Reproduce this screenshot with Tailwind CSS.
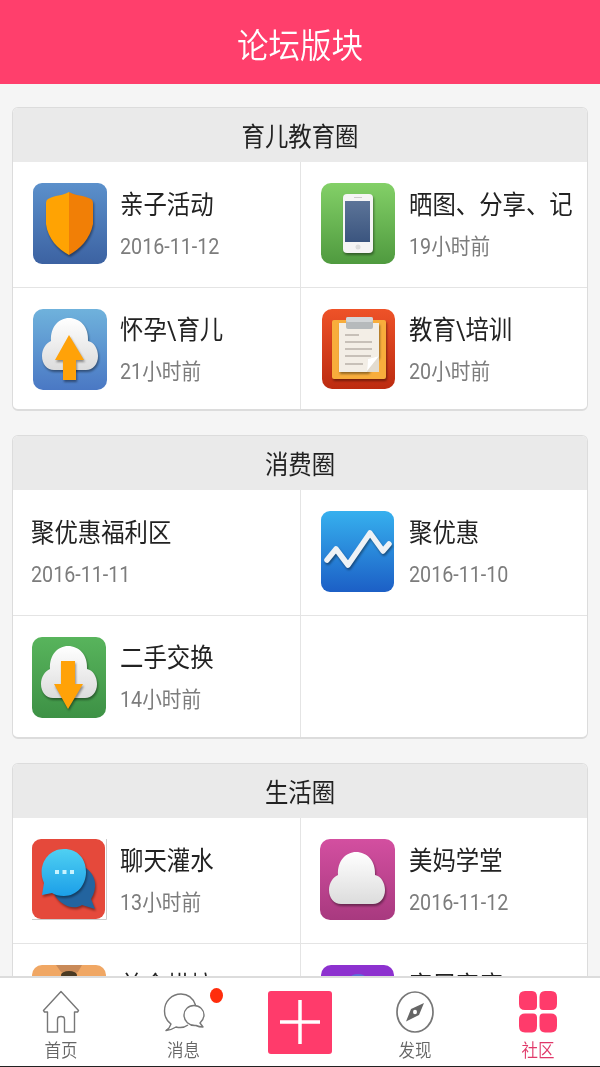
<!DOCTYPE html>
<html lang="zh-CN">
<head>
<meta charset="utf-8">
<title>论坛版块</title>
<script src="https://cdn.jsdelivr.net/npm/@tailwindcss/browser@4"></script>
</head>
<body class="w-[600px] h-[1067px] overflow-hidden bg-[#f5f5f5] font-[Roboto,'Noto_Sans_CJK_SC',sans-serif] text-[#222]">
<svg class="absolute h-0 w-0">
  <defs>
    <linearGradient id="gBlue" x1="0" y1="0" x2="0" y2="1"><stop offset="0" stop-color="#5b90cb"/><stop offset="1" stop-color="#3c62a2"/></linearGradient>
    <linearGradient id="gGreen" x1="0" y1="0" x2="0" y2="1"><stop offset="0" stop-color="#83d067"/><stop offset="1" stop-color="#4f9a3f"/></linearGradient>
    <linearGradient id="gSky" x1="0" y1="0" x2="0" y2="1"><stop offset="0" stop-color="#6fb2dc"/><stop offset="1" stop-color="#4a78c4"/></linearGradient>
    <linearGradient id="gRed" x1="0" y1="0" x2="0" y2="1"><stop offset="0" stop-color="#ee5228"/><stop offset="1" stop-color="#bc2b10"/></linearGradient>
    <linearGradient id="gChart" x1="0" y1="0" x2="0" y2="1"><stop offset="0" stop-color="#36b0ee"/><stop offset="1" stop-color="#1c5fc6"/></linearGradient>
    <linearGradient id="gLeaf" x1="0" y1="0" x2="0" y2="1"><stop offset="0" stop-color="#58b45c"/><stop offset="1" stop-color="#3d9145"/></linearGradient>
    <linearGradient id="gPink" x1="0" y1="0" x2="0" y2="1"><stop offset="0" stop-color="#d34fa0"/><stop offset="1" stop-color="#a8397f"/></linearGradient>
    <linearGradient id="gCloud" x1="0" y1="0" x2="0" y2="1"><stop offset="0" stop-color="#ffffff"/><stop offset="1" stop-color="#dcdcdc"/></linearGradient>
    <linearGradient id="gBubble" x1="0" y1="0" x2="0" y2="1"><stop offset="0" stop-color="#4fd0f2"/><stop offset="1" stop-color="#1c9fe8"/></linearGradient>
    <linearGradient id="gScreen" x1="0" y1="0" x2="0" y2="1"><stop offset="0" stop-color="#5c7498"/><stop offset="1" stop-color="#3b557f"/></linearGradient>
    <filter id="sh" x="-20%" y="-20%" width="150%" height="150%" color-interpolation-filters="sRGB"><feDropShadow dx="1" dy="2" stdDeviation="1.2" flood-color="#000" flood-opacity=".4"/></filter>
    <path id="cloud" d="M21 62C14 62 9 56 9 48C9 41 13 35 18 33C17 19 26 10 36 10C47 10 56 19 55 33C61 34 65 41 65 48C65 56 60 62 53 62Z"/>
  </defs>
</svg>
<div class="flex h-full flex-col">
  <header class="flex h-[84px] shrink-0 items-center justify-center bg-[#ff3f6c] pt-[9px]">
    <h1 class="scale-y-110 text-[31.5px] leading-10 font-[350] text-white">论坛版块</h1>
  </header>

  <main class="flex min-h-0 flex-1 flex-col gap-6 overflow-hidden px-3 pt-[23px]">
    <section class="h-[304px] shrink-0 overflow-hidden rounded-md border border-b-2 border-[#dcdcdc] bg-white">
      <h2 class="flex h-[54px] items-center justify-center bg-[#eaeaea] pt-[5px] text-[23.4px]"><span class="scale-y-110">育儿教育圈</span></h2>
      <div class="grid grid-cols-[288px_286px] grid-rows-[126px_122px]">
        <div class="flex gap-[13px] border-r border-b border-[#e4e4e4] pt-5 pl-5">
          <svg class="h-[83px] w-[74px] shrink-0" viewBox="0 0 74 83"><rect x="0" y="1" width="74" height="81" rx="9" fill="url(#gBlue)"/><g filter="url(#sh)"><path d="M36 10C29 14 22 13 15 17Q13 18 13 21V42C15 57 25 67 36 73Z" fill="#ffa303"/><path d="M36 10C43 14 50 13 58 17Q60 18 60 21V42C57 57 47 67 36 73Z" fill="#f17f06"/></g></svg>
          <div class="flex flex-col whitespace-nowrap pt-[6px]"><span class="scale-y-110 text-[23.4px] leading-[35px]">亲子活动</span><span class="mt-[10px] scale-y-110 text-[19.7px] leading-7 font-normal text-[#7c7c7c]">2016-11-12</span></div>
        </div>
        <div class="flex gap-[14px] border-b border-[#e4e4e4] pt-5 pl-5">
          <svg class="h-[83px] w-[74px] shrink-0" viewBox="0 0 74 83"><rect x="0" y="1" width="74" height="81" rx="10" fill="url(#gGreen)"/><g filter="url(#sh)"><rect x="22" y="12" width="30" height="59" rx="4" fill="#f5f5f5"/></g><rect x="24" y="19" width="25" height="41" fill="url(#gScreen)"/><circle cx="37" cy="65" r="2.5" fill="#ddd"/><path d="M33 15.500h8" stroke="#ccc"/></svg>
          <div class="flex flex-col whitespace-nowrap pt-[6px]"><span class="scale-y-110 text-[23.4px] leading-[35px]">晒图、分享、记</span><span class="mt-[10px] scale-y-110 text-[19.7px] leading-7 font-normal text-[#7c7c7c]">19小时前</span></div>
        </div>
        <div class="flex gap-[13px] border-r border-[#e4e4e4] pt-5 pl-5">
          <svg class="h-[83px] w-[74px] shrink-0" viewBox="0 0 74 83"><rect x="0" y="1" width="74" height="81" rx="10" fill="url(#gSky)"/><use href="#cloud" fill="url(#gCloud)" filter="url(#sh)"/><path d="M36 27L51 52H43V72H30V52H22Z" fill="#ffa208" filter="url(#sh)"/></svg>
          <div class="flex flex-col whitespace-nowrap pt-[5px]"><span class="scale-y-110 text-[23.4px] leading-[35px]">怀孕\育儿</span><span class="mt-[10px] scale-y-110 text-[19.7px] leading-7 font-normal text-[#7c7c7c]">21小时前</span></div>
        </div>
        <div class="flex gap-[14px] pt-5 pl-5">
          <svg class="h-[83px] w-[74px] shrink-0" viewBox="0 0 74 83"><rect x="1" y="1" width="73" height="80" rx="10" fill="url(#gRed)"/><rect x="11" y="12" width="54" height="59" rx="2" fill="#f8ad3c" filter="url(#sh)"/><path d="M18 15H58V48L47 64H18Z" fill="#f3eee6" filter="url(#sh)"/><path d="M46 64L47 51L58 48V64Z" fill="#e3dcd0"/><path d="M47 51L58 48L46 63Z" fill="#fff"/><path d="M24 27H38M24 34H51M24 41H51M24 48H50M24 56H42" stroke="#c7c0b8" stroke-width="2"/><rect x="25" y="9" width="27" height="12" rx="2" fill="#b6babc"/><rect x="25" y="9" width="27" height="5" rx="2" fill="#d3d6d8"/></svg>
          <div class="flex flex-col whitespace-nowrap pt-[5px]"><span class="scale-y-110 text-[23.4px] leading-[35px]">教育\培训</span><span class="mt-[10px] scale-y-110 text-[19.7px] leading-7 font-normal text-[#7c7c7c]">20小时前</span></div>
        </div>
      </div>
    </section>

    <section class="h-[304px] shrink-0 overflow-hidden rounded-md border border-b-2 border-[#dcdcdc] bg-white">
      <h2 class="flex h-[54px] items-center justify-center bg-[#eaeaea] pt-[5px] text-[23.4px]"><span class="scale-y-110">消费圈</span></h2>
      <div class="grid grid-cols-[288px_286px] grid-rows-[126px_122px]">
        <div class="flex border-r border-b border-[#e4e4e4] pt-5 pl-[18px]">
          <div class="flex flex-col whitespace-nowrap pt-[6px]"><span class="scale-y-110 text-[23.4px] leading-[35px]">聚优惠福利区</span><span class="mt-[10px] scale-y-110 text-[19.7px] leading-7 font-normal text-[#7c7c7c]">2016-11-11</span></div>
        </div>
        <div class="flex gap-[14px] border-b border-[#e4e4e4] pt-5 pl-5">
          <svg class="h-[83px] w-[74px] shrink-0" viewBox="0 0 74 83"><rect x="0" y="1" width="73" height="81" rx="9" fill="url(#gChart)"/><path d="M6 50L15 39L27 55L49 23L62 41L68 34" fill="none" stroke="#eef2f6" stroke-width="5.500" stroke-linecap="round" stroke-linejoin="round" filter="url(#sh)"/></svg>
          <div class="flex flex-col whitespace-nowrap pt-[6px]"><span class="scale-y-110 text-[23.4px] leading-[35px]">聚优惠</span><span class="mt-[10px] scale-y-110 text-[19.7px] leading-7 font-normal text-[#7c7c7c]">2016-11-10</span></div>
        </div>
        <div class="flex gap-[13px] border-r border-[#e4e4e4] pt-5 pl-[19px]">
          <svg class="h-[83px] w-[75px] shrink-0" viewBox="0 0 75 83"><rect x="0" y="1" width="74" height="81" rx="10" fill="url(#gLeaf)"/><use href="#cloud" fill="url(#gCloud)" filter="url(#sh)"/><path d="M36 73L22 48H29V25H43V48H51Z" fill="#ffa208" filter="url(#sh)"/></svg>
          <div class="flex flex-col whitespace-nowrap pt-[5px]"><span class="scale-y-110 text-[23.4px] leading-[35px]">二手交换</span><span class="mt-[10px] scale-y-110 text-[19.7px] leading-7 font-normal text-[#7c7c7c]">14小时前</span></div>
        </div>
        <div></div>
      </div>
    </section>

    <section class="h-[304px] shrink-0 overflow-hidden rounded-md border border-b-2 border-[#dcdcdc] bg-white">
      <h2 class="flex h-[54px] items-center justify-center bg-[#eaeaea] pt-[5px] text-[23.4px]"><span class="scale-y-110">生活圈</span></h2>
      <div class="grid grid-cols-[288px_286px] grid-rows-[126px_122px]">
        <div class="flex gap-[13px] border-r border-b border-[#e4e4e4] pt-5 pl-[19px]">
          <svg class="h-[83px] w-[75px] shrink-0" viewBox="0 0 75 83"><path d="M0 81.500H74.500V1" fill="none" stroke="#ccc"/><rect x="0" y="1" width="73" height="80" rx="9" fill="#e5493b"/><path d="M22 56C30 69 42 72 50 67L63 71L59 61C66 50 64 37 54 30Z" fill="#23649f" filter="url(#sh)"/><path d="M10 57L12 45C5 30 14 11 32 11C46 11 54 21 54 34C54 47 45 58 32 58C27 58 23 57 20 55Z" fill="url(#gBubble)" filter="url(#sh)"/><path d="M23 34h4m3.500 0h4m3.500 0h4" stroke="#c8f3ff" stroke-width="4"/></svg>
          <div class="flex flex-col whitespace-nowrap pt-[6px]"><span class="scale-y-110 text-[23.4px] leading-[35px]">聊天灌水</span><span class="mt-[10px] scale-y-110 text-[19.7px] leading-7 font-normal text-[#7c7c7c]">13小时前</span></div>
        </div>
        <div class="flex gap-[14px] border-b border-[#e4e4e4] pt-5 pl-[19px]">
          <svg class="h-[83px] w-[75px] shrink-0" viewBox="0 0 75 83"><rect x="0" y="1" width="75" height="81" rx="10" fill="url(#gPink)"/><use href="#cloud" y="4" fill="url(#gCloud)" filter="url(#sh)"/></svg>
          <div class="flex flex-col whitespace-nowrap pt-[6px]"><span class="scale-y-110 text-[23.4px] leading-[35px]">美妈学堂</span><span class="mt-[10px] scale-y-110 text-[19.7px] leading-7 font-normal text-[#7c7c7c]">2016-11-12</span></div>
        </div>
        <div class="flex gap-[13px] border-r border-[#e4e4e4] pt-5 pl-[19px]">
          <svg class="h-[83px] w-[75px] shrink-0" viewBox="0 0 75 83"><rect x="0" y="1" width="74" height="80" rx="10" fill="#f0a764"/><path d="M24 1H50L46 8L37 12L29 8Z" fill="#c98a58"/><ellipse cx="37" cy="11" rx="8" ry="4" fill="#4a3a22"/></svg>
          <div class="flex flex-col whitespace-nowrap pt-[5px]"><span class="scale-y-110 text-[23.4px] leading-[35px]">美食烘焙</span></div>
        </div>
        <div class="flex gap-[14px] pt-5 pl-5">
          <svg class="h-[83px] w-[74px] shrink-0" viewBox="0 0 74 83"><rect x="0" y="1" width="73" height="80" rx="10" fill="#8d31cf"/><ellipse cx="37" cy="14" rx="8" ry="4" fill="#5c6fd8"/></svg>
          <div class="flex flex-col whitespace-nowrap pt-[5px]"><span class="scale-y-110 text-[23.4px] leading-[35px]">家居家庭</span></div>
        </div>
      </div>
    </section>
  </main>

  <nav class="flex h-[91px] shrink-0 border-t-2 border-b border-t-[#dcdcdc] border-b-[#222] bg-white text-[16.5px] leading-6 font-[350] text-[#666]">
    <div class="flex w-[122px] flex-col items-center pt-3">
      <svg class="h-[44px] w-[40px]" viewBox="0 0 40 44" fill="none" stroke="#777" stroke-width="1.400" stroke-linejoin="round"><path d="M20 1.500L37.500 20.500L36.500 22H33.500V42H23.500V29Q23.500 26.500 20 26.500Q16.500 26.500 16.500 29V42H6.500V22H3.500L2.500 20.500Z"/></svg>
      <span class="mt-[5px] scale-y-110">首页</span>
    </div>
    <div class="relative flex w-[123px] flex-col items-center pt-3">
      <svg class="h-[44px] w-[42px]" viewBox="0 0 42 44" fill="none" stroke="#777" stroke-width="1.400" stroke-linejoin="round"><path d="M32.500 15C30 8 25 4 18 4C9 4 1.500 11 1.500 21C1.500 27 4 31 8 34L6 38L3 40.500C7 40 10 39 13 37C17 38 21 38 25 35M31 15.500C37 15.500 41 20 41 25C41 29 39 31 37 33L40 37C37 37 35 36.500 33 35.500C26 36 21 31 21 25C21 20 25 15.500 31 15.500Z"/></svg>
      <span class="mt-[5px] scale-y-110">消息</span>
      <span class="absolute top-[10px] left-[88px] h-[15px] w-[13px] rounded-[50%] bg-[#ff2d0c]"></span>
    </div>
    <div class="flex w-[109px] justify-center pt-[13px]">
      <svg class="h-[63px] w-[64px]" viewBox="0 0 64 63"><rect width="64" height="63" rx="3" fill="#ff3b6b"/><path d="M12 31H52M32 9V53" stroke="#fff" stroke-width="3.500"/></svg>
    </div>
    <div class="flex w-[122px] flex-col items-center pt-3">
      <svg class="h-[44px] w-[40px]" viewBox="0 0 40 44"><ellipse cx="20" cy="22" rx="18" ry="20" fill="none" stroke="#777" stroke-width="1.700"/><path d="M29 13L24 25L11 31.500L16 19Z" fill="#666"/><ellipse cx="20" cy="22" rx="2" ry="2.200" fill="#fff"/></svg>
      <span class="mt-[5px] scale-y-110">发现</span>
    </div>
    <div class="flex w-[124px] flex-col items-center pt-3 text-[#e03768]">
      <svg class="h-[44px] w-[40px]" viewBox="0 0 40 44" fill="#ff3b6b"><path d="M7 1H14Q19 1 19 7V16Q19 20 15 20H7Q1 20 1 14V7Q1 1 7 1ZM27 1H33Q39 1 39 7V14Q39 20 33 20H25Q21.500 20 21.500 16V7Q21.500 1 27 1ZM7 23.500H15Q19 23.500 19 27.500V36Q19 42.500 14 42.500H7Q1 42.500 1 36V29.500Q1 23.500 7 23.500ZM25 23.500H33Q39 23.500 39 29.500V36Q39 42.500 33 42.500H27Q21.500 42.500 21.500 36V27.500Q21.500 23.500 25 23.500Z"/></svg>
      <span class="mt-[5px] scale-y-110">社区</span>
    </div>
  </nav>
</div>
</body>
</html>
